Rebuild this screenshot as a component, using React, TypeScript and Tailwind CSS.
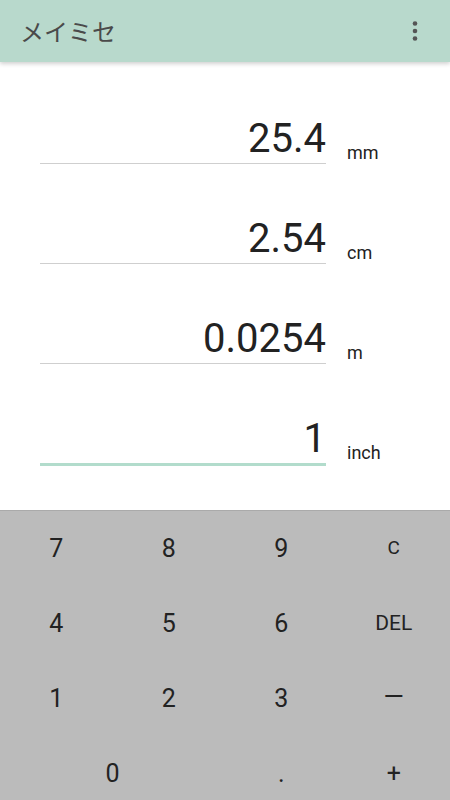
const fields = [
  { value: '25.4', unit: 'mm', active: false },
  { value: '2.54', unit: 'cm', active: false },
  { value: '0.0254', unit: 'm', active: false },
  { value: '1', unit: 'inch', active: true },
];

const keys = [
  { label: '7', size: 'text-[25px]', span: 'col-span-1' },
  { label: '8', size: 'text-[25px]', span: 'col-span-1' },
  { label: '9', size: 'text-[25px]', span: 'col-span-1' },
  { label: 'C', size: 'text-[19px]', span: 'col-span-1' },
  { label: '4', size: 'text-[25px]', span: 'col-span-1' },
  { label: '5', size: 'text-[25px]', span: 'col-span-1' },
  { label: '6', size: 'text-[25px]', span: 'col-span-1' },
  { label: 'DEL', size: 'text-[21px]', span: 'col-span-1' },
  { label: '1', size: 'text-[25px]', span: 'col-span-1' },
  { label: '2', size: 'text-[25px]', span: 'col-span-1' },
  { label: '3', size: 'text-[25px]', span: 'col-span-1' },
  { label: '—', size: 'text-[26px] pb-[4px]', span: 'col-span-1' },
  { label: '0', size: 'text-[25px]', span: 'col-span-2' },
  { label: '.', size: 'text-[25px]', span: 'col-span-1' },
  { label: '+', size: 'text-[25px]', span: 'col-span-1' },
];

export default function App() {
  return (
    <div className="w-[450px] h-[800px] overflow-hidden bg-white flex flex-col font-['Roboto',sans-serif]">
      {/* ツールバー */}
      <header className="h-[62px] shrink-0 bg-[#b8d9cc] flex items-center justify-between pl-[20px] pr-[32px] shadow-[0_2px_4px_rgba(0,0,0,0.18)] relative z-10">
        <h1 className="text-[24px] text-[#4a4a4a] font-['Noto_Sans_CJK_JP','Noto_Sans',sans-serif] leading-none">
          メイミセ
        </h1>
        <svg width="6" height="20" viewBox="0 0 6 20">
          <circle cx="3" cy="2.5" r="2.3" fill="#555" />
          <circle cx="3" cy="10" r="2.3" fill="#555" />
          <circle cx="3" cy="17.5" r="2.3" fill="#555" />
        </svg>
      </header>

      {/* 入力欄 */}
      <main className="h-[448px] shrink-0 flex flex-col pt-[2px]">
        {fields.map((f) => (
          <div key={f.unit} className="h-[100px] shrink-0 flex items-end pl-[40px]">
            <div
              className={`w-[286px] text-right text-[40px] leading-[48px] text-[#222] ${
                f.active ? 'border-b-[3px] border-[#b2dccc] mb-[-2px]' : 'border-b border-[#cfcfcf]'
              }`}
            >
              {f.value}
            </div>
            <span className="ml-[21px] mb-[2px] text-[18px] leading-none text-[#222]">{f.unit}</span>
          </div>
        ))}
      </main>

      {/* キーパッド */}
      <div className="flex-1 bg-[#bbbbbb] border-t border-[#aaaaaa] grid grid-cols-4 auto-rows-[75px]">
        {keys.map((k) => (
          <button
            key={k.label}
            className={`${k.span} flex items-center justify-center text-[#222] ${k.size}`}
          >
            {k.label}
          </button>
        ))}
      </div>
    </div>
  );
}
